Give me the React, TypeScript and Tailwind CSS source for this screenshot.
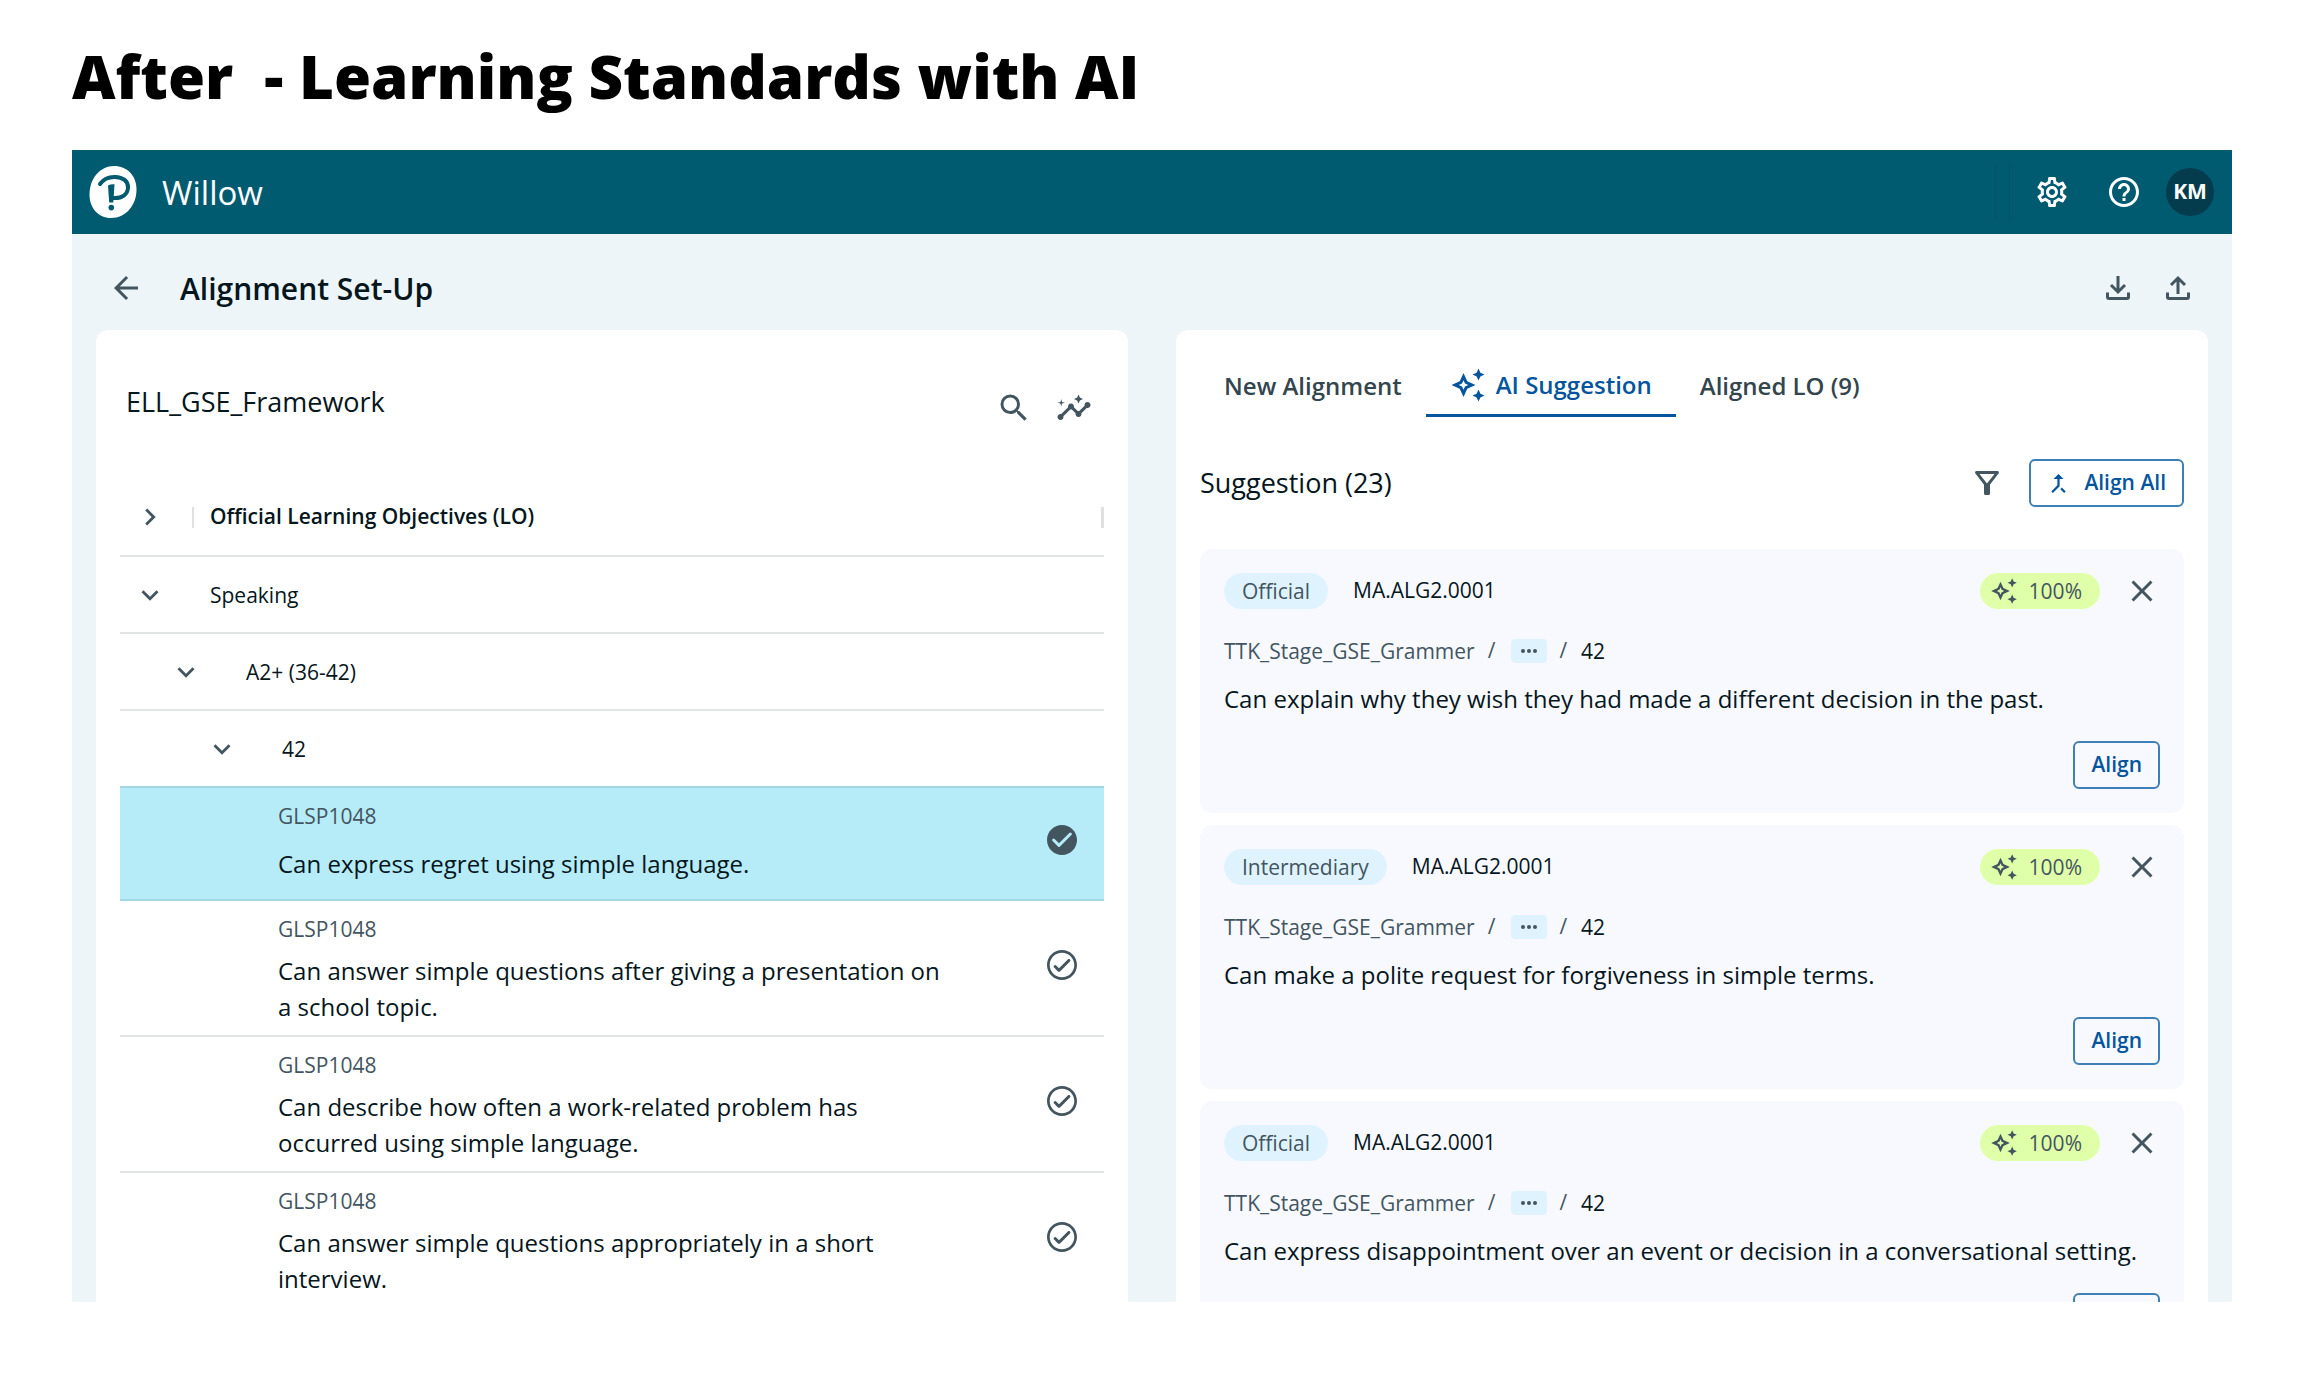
import React from "react";
import {
  MdArrowBack,
  MdCallMerge,
  MdChevronRight,
  MdClose,
  MdExpandMore,
  MdHelpOutline,
  MdInsights,
  MdOutlineFilterAlt,
  MdOutlineSettings,
  MdSearch,
} from "react-icons/md";

function Sparkles({ className }: { className: string }) {
  return (
    <svg viewBox="0 0 24 24" fill="currentColor" className={className} aria-hidden="true">
      <path d="M19 9l1.25-2.75L23 5l-2.75-1.25L19 1l-1.25 2.75L15 5l2.75 1.25L19 9zm0 6l-1.25 2.75L15 19l2.75 1.25L19 23l1.25-2.75L23 19l-2.75-1.25L19 15zm-7.5-5.5L9 4 6.5 9.5 1 12l5.5 2.5L9 20l2.5-5.5L17 12l-5.5-2.5zm-1.51 3.49L9 15.17l-.99-2.18L5.83 12l2.18-.99L9 8.83l.99 2.18 2.18.99-2.18.99z" />
    </svg>
  );
}

function TransferIcon({ up }: { up?: boolean }) {
  return (
    <svg viewBox="0 0 36 36" fill="none" stroke="currentColor" strokeWidth="3" className="size-9" aria-hidden="true">
      <path d={up ? "M18 24V8M11 15l7-7 7 7" : "M18 6v16M11 15l7 7 7-7"} />
      <path d="M7.5 22.5v4.5a1.5 1.5 0 0 0 1.5 1.5h18a1.5 1.5 0 0 0 1.5-1.5v-4.5" />
    </svg>
  );
}

function CheckCircle({ filled }: { filled?: boolean }) {
  return (
    <svg viewBox="0 0 24 24" fill="currentColor" className="size-9" aria-hidden="true">
      {filled ? (
        <path d="M12 2C6.48 2 2 6.48 2 12s4.48 10 10 10 10-4.48 10-10S17.52 2 12 2zM9.29 16.29 5.7 12.7a.996.996 0 1 1 1.41-1.41L10 14.17l6.88-6.88a.996.996 0 1 1 1.41 1.41l-7.59 7.59a.996.996 0 0 1-1.41 0z" />
      ) : (
        <path d="M12 2C6.48 2 2 6.48 2 12s4.48 10 10 10 10-4.48 10-10S17.52 2 12 2zm0 18.2c-4.5 0-8.2-3.7-8.2-8.2S7.5 3.8 12 3.8s8.2 3.7 8.2 8.2-3.7 8.2-8.2 8.2zM15.88 8.29 10 14.17l-1.88-1.88a.996.996 0 1 0-1.41 1.41l2.59 2.59c.39.39 1.02.39 1.41 0L17.3 9.7a.996.996 0 0 0 0-1.41c-.39-.39-1.03-.39-1.42 0z" />
      )}
    </svg>
  );
}

function Logo() {
  return (
    <svg viewBox="0 0 48 54" className="h-[54px] w-12" role="img" aria-label="Company logo">
      <path
        fill="#fff"
        d="M25 1C38 1 47.5 10.5 47.5 24.5C47.5 40 37 53 22 53C9 53 0.5 43 0.5 29.5C0.5 13.5 11 1 25 1Z"
      />
      <path
        d="M11 19C14.5 14 19.500 11.800 26 12C34 12.200 39.200 16 39 22.500C38.800 29.500 33 33.500 24.500 33"
        fill="none"
        stroke="#005a70"
        strokeWidth="4"
        strokeLinecap="round"
      />
      <path d="M19 20.5Q22 18.800 25.500 19.300L24.300 37.500H20.200Z" fill="#005a70" />
      <circle cx="22.3" cy="42.6" r="2.8" fill="#005a70" />
    </svg>
  );
}

type Standard = { code: string; text: string; selected?: boolean };

const STANDARDS: Standard[] = [
  { code: "GLSP1048", text: "Can express regret using simple language.", selected: true },
  { code: "GLSP1048", text: "Can answer simple questions after giving a presentation on a school topic." },
  { code: "GLSP1048", text: "Can describe how often a work-related problem has occurred using simple language." },
  { code: "GLSP1048", text: "Can answer simple questions appropriately in a short interview." },
];

const LEVELS = [
  { label: "Speaking", indent: "pl-[13px]" },
  { label: "A2+ (36-42)", indent: "pl-[49px]" },
  { label: "42", indent: "pl-[85px]" },
];

const SUGGESTIONS = [
  { kind: "Official", text: "Can explain why they wish they had made a different decision in the past." },
  { kind: "Intermediary", text: "Can make a polite request for forgiveness in simple terms." },
  { kind: "Official", text: "Can express disappointment over an event or decision in a conversational setting." },
];

function StandardRow({ code, text, selected }: Standard) {
  return (
    <li
      className={
        selected
          ? "flex items-center border-b-2 border-[#a5d7e1] bg-[#b5ecf8] pt-3 pb-[17px] pl-[158px] pr-6"
          : "flex items-center border-b-2 border-[#e2e3e4] pt-3 pb-[10px] pl-[158px] pr-6"
      }
    >
      <div className="flex-1">
        <p className="text-[21px] leading-8 text-[#43555f]">{code}</p>
        <p className={selected ? "mt-[14px] pr-[95px] text-2xl leading-9" : "mt-2 pr-[95px] text-2xl leading-9"}>{text}</p>
      </div>
      <button
        type="button"
        aria-label={selected ? "Selected standard" : "Select standard"}
        className={selected ? "pb-[2px] text-[#43555f]" : "pb-2 text-[#43555f]"}
      >
        <CheckCircle filled={selected} />
      </button>
    </li>
  );
}

function FrameworkPanel() {
  return (
    <section className="flex-1 rounded-t-xl bg-white px-6 pt-12">
      <div className="flex items-center justify-between pl-[6px] pr-3">
        <h3 className="text-[27px] leading-[48px]">ELL_GSE_Framework</h3>
        <div className="flex gap-6 pt-3 text-[#43555f]">
          <button type="button" aria-label="Search">
            <MdSearch className="size-9" />
          </button>
          <button type="button" aria-label="Insights">
            <MdInsights className="size-9" />
          </button>
        </div>
      </div>

      <div className="mt-[49px] flex h-[82px] items-center border-b-2 border-[#e2e3e4] pt-1 pl-[13px]">
        <button type="button" aria-label="Expand objectives" className="text-[#43555f]">
          <MdChevronRight className="size-[34px]" />
        </button>
        <span className="ml-[25px] h-[21px] w-[2px] bg-[#dfe0e1]" />
        <span className="ml-4 flex-1 text-[21px] font-semibold">Official Learning Objectives (LO)</span>
        <span className="h-[21px] w-[3px] bg-[#dfe0e1]" />
      </div>
      {LEVELS.map((level, i) => (
        <div
          key={level.label}
          className={`flex h-[77px] items-center gap-[43px] border-b-2 ${level.indent} ${
            i === LEVELS.length - 1 ? "border-[#a5d7e1]" : "border-[#e2e3e4]"
          }`}
        >
          <button type="button" aria-label={`Collapse ${level.label}`} className="text-[#43555f]">
            <MdExpandMore className="size-[34px]" />
          </button>
          <span className="text-[21px] leading-8">{level.label}</span>
        </div>
      ))}
      <ul>
        {STANDARDS.map((s, i) => (
          <StandardRow key={i} {...s} />
        ))}
      </ul>
    </section>
  );
}

function SuggestionCard({ kind, text }: { kind: string; text: string }) {
  return (
    <article className="rounded-xl bg-[#f8f9ff] p-6">
      <div className="flex items-center">
        <span className="rounded-full bg-[#dff3ff] px-[18px] text-[21px] leading-9 text-[#43555f]">{kind}</span>
        <span className="ml-[25px] flex-1 pb-[2px] text-[21px] leading-8">MA.ALG2.0001</span>
        <span className="flex items-center gap-[11px] rounded-full bg-[#e0ffa9] pl-[10px] pr-[18px] text-[21px] leading-9 text-[#43555f]">
          <Sparkles className="size-7" />
          100%
        </span>
        <button type="button" aria-label="Dismiss suggestion" className="ml-6 text-[#43555f]">
          <MdClose className="size-9" />
        </button>
      </div>
      <nav aria-label="Breadcrumb" className="mt-[26px] flex h-8 items-center text-[21px] leading-8 text-[#43555f]">
        <a href="#framework">TTK_Stage_GSE_Grammer</a>
        <span className="ml-[13px] pb-[2px]">/</span>
        <button
          type="button"
          aria-label="Show hidden levels"
          className="ml-4 flex h-6 w-9 items-center justify-center gap-[2px] rounded-sm bg-[#dff3ff]"
        >
          <span className="size-1 rounded-full bg-[#43555f]" />
          <span className="size-1 rounded-full bg-[#43555f]" />
          <span className="size-1 rounded-full bg-[#43555f]" />
        </button>
        <span className="ml-3 pb-[2px]">/</span>
        <span className="ml-[14px] text-[#05161c]">42</span>
      </nav>
      <p className="mt-[14px] text-2xl leading-9">{text}</p>
      <div className="mt-6 flex justify-end">
        <button type="button" className="h-12 rounded-md border-2 border-[#3f7fb8] px-4 text-[21px] font-semibold text-[#05559e]">
          Align
        </button>
      </div>
    </article>
  );
}

function SuggestionPanel() {
  return (
    <section className="flex-1 rounded-t-xl bg-white px-6 pt-6">
      <div role="tablist" className="flex h-[63px] text-2xl font-semibold text-[#33454d]">
        <button type="button" role="tab" aria-selected="false" className="px-6">
          New Alignment
        </button>
        <button
          type="button"
          role="tab"
          aria-selected="true"
          className="flex items-center gap-[10px] border-b-[3px] border-[#05559e] px-6 pt-[2px] text-[#05559e]"
        >
          <Sparkles className="size-9" />
          AI Suggestion
        </button>
        <button type="button" role="tab" aria-selected="false" className="px-6">
          Aligned LO (9)
        </button>
      </div>
      <div className="mt-[42px] flex items-center">
        <h3 className="flex-1 text-[27px] leading-9">Suggestion (23)</h3>
        <button type="button" aria-label="Filter" className="text-[#43555f]">
          <MdOutlineFilterAlt className="size-9" />
        </button>
        <button
          type="button"
          className="ml-6 flex h-12 items-center gap-3 rounded-md border-2 border-[#3f7fb8] pl-[14px] pr-4 text-[21px] font-semibold text-[#05559e]"
        >
          <MdCallMerge className="size-[27px]" />
          Align All
        </button>
      </div>
      <div className="mt-[42px] flex flex-col gap-3">
        {SUGGESTIONS.map((s, i) => (
          <SuggestionCard key={i} {...s} />
        ))}
      </div>
    </section>
  );
}

export default function App() {
  return (
    <div className="flex h-screen flex-col bg-white px-[72px] pb-[72px] font-['Open_Sans',sans-serif] text-[#05161c]">
      <h1 className="h-[150px] whitespace-pre pt-[35px] text-[60px] leading-[82px] font-extrabold text-black">
        After  - Learning Standards with AI
      </h1>
      <div className="flex min-h-0 flex-1 flex-col overflow-hidden bg-[#edf5f9]">
        <header className="flex h-[84px] shrink-0 items-center bg-[#005a70] pl-[17px] pr-[18px] text-white">
          <Logo />
          <span className="ml-[25px] flex-1 pt-[2px] text-[33px]">Willow</span>
          <span className="h-[60px] w-px bg-[#045266]" />
          <span className="ml-[13px] h-[60px] w-px bg-[#045266]" />
          <button type="button" aria-label="Settings" className="ml-6">
            <MdOutlineSettings className="size-9" />
          </button>
          <button type="button" aria-label="Help" className="ml-9">
            <MdHelpOutline className="size-9" />
          </button>
          <button type="button" aria-label="Account KM" className="ml-6 size-12 rounded-full bg-[#043c4e] text-[21px] font-bold">
            KM
          </button>
        </header>
        <div className="flex h-24 shrink-0 items-center px-9 pt-3">
          <div className="flex flex-1 items-center">
            <button type="button" aria-label="Back" className="text-[#43555f]">
              <MdArrowBack className="size-9" />
            </button>
            <h2 className="ml-9 text-[30px] font-semibold">Alignment Set-Up</h2>
          </div>
          <div className="flex gap-6 text-[#43555f]">
            <button type="button" aria-label="Download">
              <TransferIcon />
            </button>
            <button type="button" aria-label="Upload">
              <TransferIcon up />
            </button>
          </div>
        </div>
        <main className="flex gap-12 px-6">
          <FrameworkPanel />
          <SuggestionPanel />
        </main>
      </div>
    </div>
  );
}
